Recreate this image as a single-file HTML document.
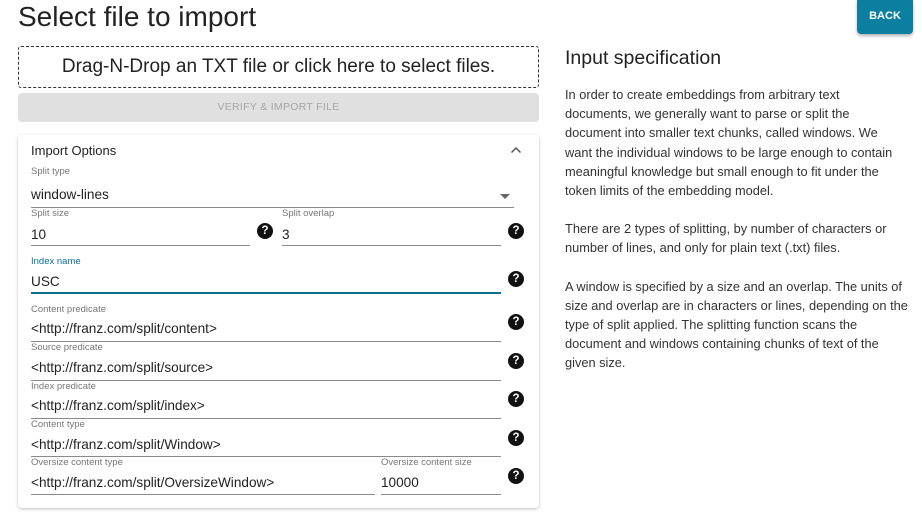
<!DOCTYPE html>
<html><head><style>
*{margin:0;padding:0;box-sizing:border-box}
body{width:922px;height:516px;background:#fff;font-family:"Liberation Sans",sans-serif;color:#222;position:relative;overflow:hidden}
.a{position:absolute}
.lbl{position:absolute;font-size:9.5px;color:#777;white-space:nowrap}
.val{position:absolute;font-size:13.6px;color:#222;white-space:nowrap}
.ul{position:absolute;height:1px;background:#8a8a8a}
.q{position:absolute;width:16px;height:16px;border-radius:50%;background:#111;color:#fff;font-size:11.5px;font-weight:bold;text-align:center;line-height:16px;margin:-1px 0 0 -1px}
p{margin:0}
</style></head><body>
<div class="a" style="left:18px;top:1px;font-size:28px;color:#222">Select file to import</div>
<div class="a" style="left:857px;top:0;width:56px;height:34px;background:#0a7fa0;border-radius:0 0 4px 4px;box-shadow:0 2px 3px rgba(0,0,0,.3);color:#fff;font-size:11px;font-weight:bold;text-align:center;line-height:32px">BACK</div>
<div class="a" style="left:18px;top:46px;width:521px;height:42px;border:1px dashed #333;border-radius:3px;text-align:center;font-size:19px;line-height:40px;color:#222">Drag-N-Drop an TXT file or click here to select files.</div>
<div class="a" style="left:18px;top:93px;width:521px;height:29px;background:#e0e0e0;border-radius:4px;text-align:center;font-size:10.5px;line-height:29px;color:#a6a6a6;letter-spacing:.3px">VERIFY &amp; IMPORT FILE</div>
<div class="a" style="left:18px;top:135px;width:521px;height:373px;border-radius:4px;box-shadow:0 1px 3px rgba(0,0,0,.25)"></div>
<div class="a" style="left:31px;top:143px;font-size:13px">Import Options</div>
<svg class="a" style="left:510px;top:146px" width="12" height="8"><path d="M1.5 6.5L6 2L10.5 6.5" stroke="#555" stroke-width="1.5" fill="none"/></svg>

<div class="lbl" style="left:31px;top:166px">Split type</div>
<div class="val" style="left:31px;top:187px">window-lines</div>
<svg class="a" style="left:500px;top:194px" width="10" height="6"><path d="M0 0H10L5 5Z" fill="#666"/></svg>
<div class="ul" style="left:31px;top:207px;width:483px"></div>

<div class="lbl" style="left:31px;top:208px">Split size</div>
<div class="val" style="left:31px;top:227px">10</div>
<div class="ul" style="left:31px;top:245px;width:219px"></div>
<div class="q" style="left:258px;top:224px">?</div>
<div class="lbl" style="left:282px;top:208px">Split overlap</div>
<div class="val" style="left:282px;top:227px">3</div>
<div class="ul" style="left:282px;top:245px;width:219px"></div>
<div class="q" style="left:509px;top:224px">?</div>

<div class="lbl" style="left:31px;top:256px;color:#0a7090">Index name</div>
<div class="val" style="left:31px;top:274px">USC</div>
<div class="ul" style="left:31px;top:292px;width:470px;height:2px;background:#0a7090"></div>
<div class="q" style="left:509px;top:272px">?</div>

<div class="lbl" style="left:31px;top:304px">Content predicate</div>
<div class="val" style="left:31px;top:321px">&lt;http://franz.com/split/content&gt;</div>
<div class="ul" style="left:31px;top:341px;width:470px"></div>
<div class="q" style="left:509px;top:315px">?</div>

<div class="lbl" style="left:31px;top:342px">Source predicate</div>
<div class="val" style="left:31px;top:360px">&lt;http://franz.com/split/source&gt;</div>
<div class="ul" style="left:31px;top:380px;width:470px"></div>
<div class="q" style="left:509px;top:354px">?</div>

<div class="lbl" style="left:31px;top:381px">Index predicate</div>
<div class="val" style="left:31px;top:398px">&lt;http://franz.com/split/index&gt;</div>
<div class="ul" style="left:31px;top:418px;width:470px"></div>
<div class="q" style="left:509px;top:392px">?</div>

<div class="lbl" style="left:31px;top:419px">Content type</div>
<div class="val" style="left:31px;top:437px">&lt;http://franz.com/split/Window&gt;</div>
<div class="ul" style="left:31px;top:456px;width:470px"></div>
<div class="q" style="left:509px;top:431px">?</div>

<div class="lbl" style="left:31px;top:457px">Oversize content type</div>
<div class="val" style="left:31px;top:475px">&lt;http://franz.com/split/OversizeWindow&gt;</div>
<div class="ul" style="left:31px;top:494px;width:344px"></div>
<div class="lbl" style="left:381px;top:457px">Oversize content size</div>
<div class="val" style="left:381px;top:475px">10000</div>
<div class="ul" style="left:381px;top:494px;width:120px"></div>
<div class="q" style="left:509px;top:469px">?</div>

<div class="a" style="left:565px;top:47px;font-size:19.5px;color:#222">Input specification</div>
<div class="a" style="left:565px;top:85px;width:360px;font-size:12.8px;line-height:19.2px;color:#333;white-space:nowrap">
<p>In order to create embeddings from arbitrary text<br>documents, we generally want to parse or split the<br>document into smaller text chunks, called windows. We<br>want the individual windows to be large enough to contain<br>meaningful knowledge but small enough to fit under the<br>token limits of the embedding model.</p>
<p style="margin-top:19px">There are 2 types of splitting, by number of characters or<br>number of lines, and only for plain text (.txt) files.</p>
<p style="margin-top:19px">A window is specified by a size and an overlap. The units of<br>size and overlap are in characters or lines, depending on the<br>type of split applied. The splitting function scans the<br>document and windows containing chunks of text of the<br>given size.</p>
</div>
</body></html>
